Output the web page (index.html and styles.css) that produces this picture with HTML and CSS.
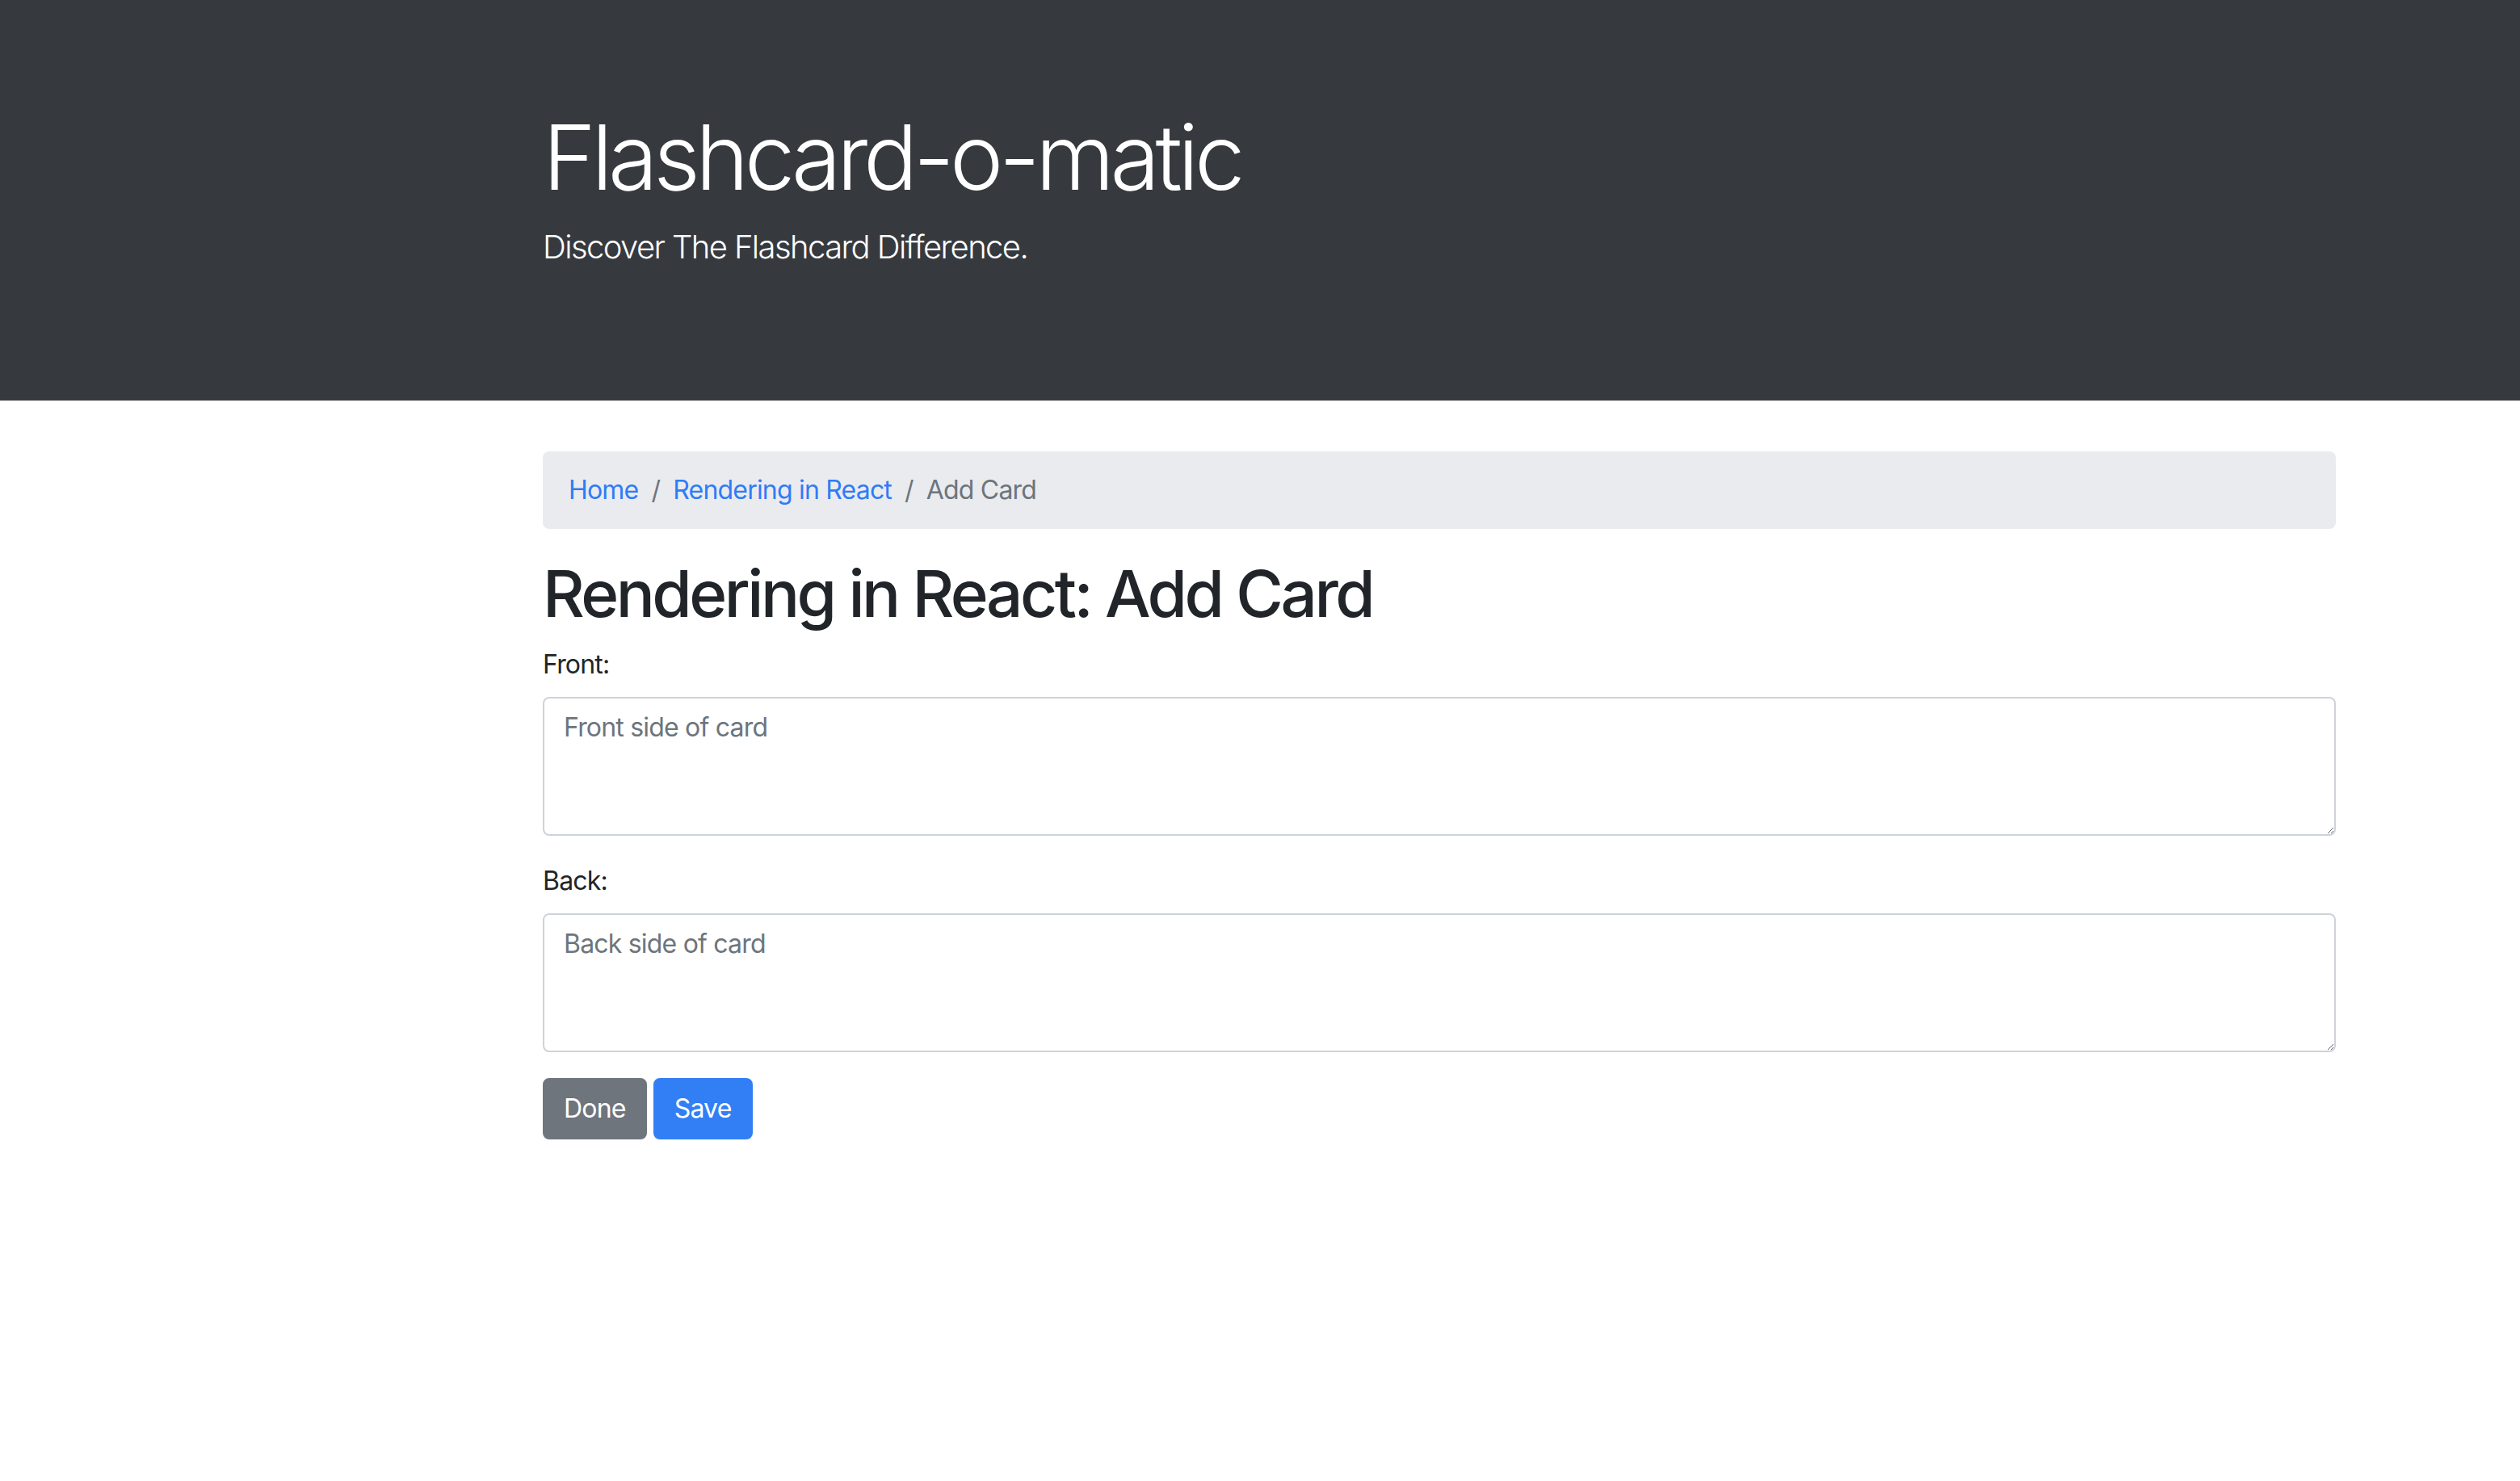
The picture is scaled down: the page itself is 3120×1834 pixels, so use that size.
FILE: index.html
```html
<!DOCTYPE html>
<html lang="en">
<head>
<meta charset="utf-8">
<title>Flashcard-o-matic</title>
<link rel="stylesheet" href="styles.css">
</head>
<body>
<header class="jumbotron">
  <div class="container">
    <h1 class="display">Flashcard-o-matic</h1>
    <p class="lead">Discover The Flashcard Difference.</p>
  </div>
</header>
<main class="container">
  <nav aria-label="breadcrumb">
    <ol class="breadcrumb">
      <li class="crumb"><a href="#" class="crumb-link">Home</a></li>
      <li class="crumb"><span class="sep">/</span><a href="#" class="crumb-link">Rendering in React</a></li>
      <li class="crumb active"><span class="sep">/</span>Add Card</li>
    </ol>
  </nav>
  <h1 class="page-title">Rendering in React: Add Card</h1>
  <form class="card-form">
    <div class="form-group">
      <label class="label" for="front">Front:</label>
      <textarea id="front" class="form-control" rows="3" placeholder="Front side of card"></textarea>
    </div>
    <div class="form-group">
      <label class="label" for="back">Back:</label>
      <textarea id="back" class="form-control" rows="3" placeholder="Back side of card"></textarea>
    </div>
    <div class="actions">
      <button type="button" class="btn btn-secondary">Done</button>
      <button type="submit" class="btn btn-primary">Save</button>
    </div>
  </form>
</main>
</body>
</html>
```
FILE: styles.css
```css
* { box-sizing: border-box; }
html, body {
  margin: 0;
  padding: 0;
  background: #ffffff;
}
body {
  font-family: Inter, "Noto Sans", "Liberation Sans", sans-serif;
  font-size: 32px;
  line-height: 48px;
  letter-spacing: -0.8px;
  color: #212529;
}
.container {
  width: 2220px;
  margin-left: 672px;
}
.jumbotron {
  background: #363a3f;
  color: #ffffff;
  padding: 128px 0;
  margin-bottom: 63px;
}
.display {
  margin: 0 0 16px 0;
  font-size: 112px;
  line-height: 132px;
  font-weight: 300;
  letter-spacing: -5.5px;
}
.lead {
  margin: 0 0 32px 0;
  font-size: 40px;
  line-height: 60px;
  font-weight: 300;
  letter-spacing: -1.6px;
}
.breadcrumb {
  list-style: none;
  display: flex;
  flex-wrap: wrap;
  margin: 0 0 32px 0;
  padding: 24px 32px;
  background: #e9ebee;
  border-radius: 8px;
}
.crumb + .crumb { padding-left: 16px; }
.sep {
  color: #6c757d;
  padding-right: 16px;
}
.crumb-link {
  color: #2f7cf6;
  text-decoration: none;
}
.crumb.active { color: #6c757d; }
.page-title {
  margin: 0 0 16px 0;
  font-size: 80px;
  line-height: 96px;
  font-weight: 500;
  letter-spacing: -3.5px;
}
.card-form { margin: 0; }
.form-group { margin-bottom: 32px; }
.label {
  display: inline-block;
  margin-bottom: 16px;
}
.form-control {
  display: block;
  width: 100%;
  padding: 12px 24px;
  font-family: inherit;
  font-size: 32px;
  line-height: 48px;
  letter-spacing: -0.8px;
  color: #495057;
  background: #ffffff;
  border: 2px solid #ced3d9;
  border-radius: 8px;
  resize: vertical;
  margin: 0;
}
.form-control::placeholder {
  color: #6c757d;
  opacity: 1;
}
.actions {
  display: flex;
  gap: 8px;
}
.btn {
  font-family: inherit;
  font-size: 32px;
  line-height: 48px;
  font-weight: 400;
  letter-spacing: -0.8px;
  padding: 12px 24px;
  border: 2px solid transparent;
  border-radius: 8px;
  color: #ffffff;
  cursor: pointer;
  margin: 0;
}
.btn-secondary {
  background: #6f757d;
  border-color: #6f757d;
}
.btn-primary {
  background: #327ff5;
  border-color: #327ff5;
}
```
